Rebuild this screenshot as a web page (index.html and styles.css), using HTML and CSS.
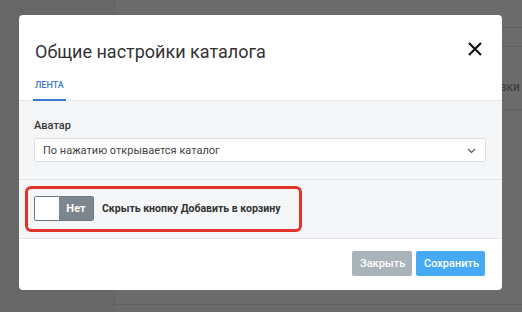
FILE: index.html
```html
<!DOCTYPE html>
<html lang="ru">
<head>
  <meta charset="UTF-8" />
  <meta name="viewport" content="width=device-width, initial-scale=1.0"/>
  <title>Общие настройки каталога</title>
  <link rel="stylesheet" href="styles.css">
</head>
<body>
  <!-- page behind the modal -->
  <div class="page">
    <aside class="sidebar"></aside>
    <main class="content">
      <div class="row row-top"></div>
      <div class="row"></div>
      <div class="row row-tall"><span class="cell-text">Загрузки</span></div>
      <div class="row row-fill"></div>
    </main>
  </div>

  <div class="overlay">
    <div class="modal">
      <div class="modal-header">
        <div class="title-row">
          <h2 class="modal-title">Общие настройки каталога</h2>
          <button class="close-btn" aria-label="Закрыть">
            <svg width="14" height="14" viewBox="0 0 14 14">
              <path d="M1 1L13 13M13 1L1 13" stroke="#111" stroke-width="2.2" fill="none"/>
            </svg>
          </button>
        </div>
        <div class="tabs">
          <span class="tab active">Лента</span>
        </div>
      </div>

      <div class="modal-body">
        <label class="field-label">Аватар</label>
        <div class="select">
          <span>По нажатию открывается каталог</span>
          <svg class="chevron" width="9" height="6" viewBox="0 0 9 6">
            <path d="M1 1L4.5 4.5L8 1" stroke="#555" stroke-width="1.1" fill="none"/>
          </svg>
        </div>
      </div>

      <div class="toggle-section">
        <div class="highlight">
          <div class="toggle">
            <span class="knob"></span>
            <span class="toggle-label">Нет</span>
          </div>
          <span class="toggle-text">Скрыть кнопку Добавить в корзину</span>
        </div>
      </div>

      <div class="modal-footer">
        <button class="btn btn-close">Закрыть</button>
        <button class="btn btn-save">Сохранить</button>
      </div>
    </div>
  </div>
</body>
</html>
```

FILE: styles.css
```css
* {
  margin: 0;
  padding: 0;
  box-sizing: border-box;
}

body {
  font-family: Roboto, 'Liberation Sans', Arial, sans-serif;
  width: 522px;
  height: 312px;
  overflow: hidden;
  position: relative;
  background: #ffffff;
}

/* Background page */
.page {
  display: flex;
  height: 100%;
}

.sidebar {
  width: 115px;
  background: #f6f6f6;
  border-right: 1px solid #ececec;
}

.content {
  flex: 1;
  display: flex;
  flex-direction: column;
}

.row {
  height: 19px;
  border-bottom: 1px solid #e8e8e8;
}

.row-top {
  height: 28px;
}

.row-tall {
  height: 63px;
  display: flex;
  align-items: center;
  justify-content: flex-end;
  padding-right: 2px;
}

.cell-text {
  font-size: 12px;
  color: #8c8c8c;
  padding-top: 18px;
}

.row-fill {
  height: 195px;
}

/* Overlay + modal */
.overlay {
  position: absolute;
  inset: 0;
  background: rgba(0, 0, 0, 0.58);
}

.modal {
  position: absolute;
  left: 19px;
  top: 15px;
  width: 483px;
  height: 275px;
  background: #ffffff;
  border-radius: 4px;
  overflow: hidden;
  display: flex;
  flex-direction: column;
}

.modal-header {
  padding: 0 16px 0 16px;
  border-bottom: 1px solid #e6e8eb;
}

.title-row {
  display: flex;
  align-items: flex-start;
  justify-content: space-between;
  padding-top: 26px;
}

.modal-title {
  font-size: 18px;
  line-height: 22px;
  font-weight: 400;
  color: #333333;
}

.close-btn {
  background: none;
  border: none;
  margin-top: 1px;
  margin-right: 4px;
  display: flex;
}

.tabs {
  display: flex;
  margin-left: -2px;
}

.tab {
  font-size: 9px;
  line-height: 12px;
  font-weight: 500;
  text-transform: uppercase;
  color: #3a78cf;
  padding: 16px 2px 8px;
  margin-bottom: -1px;
  border-bottom: 2px solid #3a78cf;
}

.modal-body {
  background: #f5f6f8;
  padding: 18px 16px 17px 15px;
  border-bottom: 1px solid #e3e5e8;
}

.field-label {
  display: block;
  font-size: 11px;
  line-height: 14px;
  font-weight: 500;
  color: #333333;
  margin-bottom: 5px;
}

.select {
  height: 24px;
  background: #ffffff;
  border: 1px solid #dcdfe3;
  border-radius: 2px;
  display: flex;
  align-items: center;
  justify-content: space-between;
  padding: 0 9px 0 8px;
  font-size: 11px;
  color: #444444;
}

.chevron {
  margin-top: 1px;
}

.toggle-section {
  background: #f5f6f8;
  padding: 6px 6px;
  border-bottom: 1px solid #e3e5e8;
}

.highlight {
  display: inline-flex;
  align-items: center;
  gap: 8px;
  border: 3px solid #e2332b;
  border-radius: 6px;
  padding: 7px 19px 8px 6px;
}

.toggle {
  display: flex;
  width: 60px;
  height: 25px;
  border: 1px solid #6f7a83;
  border-radius: 2px;
  overflow: hidden;
}

.knob {
  width: 24px;
  background: #ffffff;
}

.toggle-label {
  flex: 1;
  background: #7b868f;
  color: #ffffff;
  font-size: 11px;
  font-weight: 700;
  display: flex;
  align-items: center;
  justify-content: center;
}

.toggle-text {
  font-size: 10.5px;
  font-weight: 700;
  color: #333333;
}

.modal-footer {
  flex: 1;
  display: flex;
  justify-content: flex-end;
  align-items: flex-start;
  gap: 4px;
  padding: 12px 17px 0 0;
}

.btn {
  height: 25px;
  border: none;
  border-radius: 2px;
  color: #ffffff;
  font-family: inherit;
  font-size: 11px;
  font-weight: 500;
  padding: 0 8px;
}

.btn-close {
  width: 60px;
  background: #a9b3ba;
}

.btn-save {
  width: 69px;
  background: #45a9f4;
}
```
